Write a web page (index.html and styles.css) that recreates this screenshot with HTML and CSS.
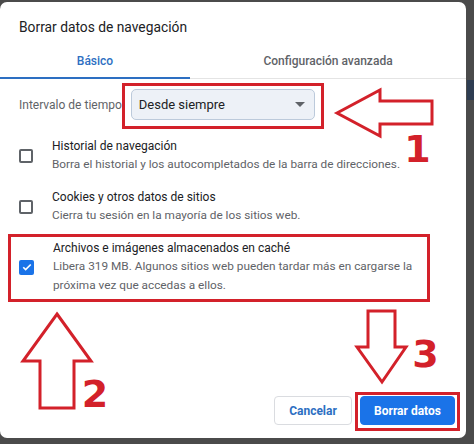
FILE: index.html
```html
<!DOCTYPE html>
<html lang="es">
<head>
<meta charset="utf-8">
<title>Borrar datos de navegación</title>
<link rel="stylesheet" href="styles.css">
</head>
<body>
<div class="page">
  <div class="bg-strip"></div>
  <div class="dialog">
    <h1 class="title">Borrar datos de navegación</h1>
    <div class="tabs">
      <div class="tab active">Básico</div>
      <div class="tab">Configuración avanzada</div>
    </div>
    <div class="range">
      <span class="label">Intervalo de tiempo</span>
      <div class="select">
        <span class="select-value">Desde siempre</span>
        <span class="caret"></span>
      </div>
    </div>
    <div class="options">
      <div class="option">
        <span class="checkbox"></span>
        <div class="option-text">
          <div class="option-title">Historial de navegación</div>
          <div class="option-desc">Borra el historial y los autocompletados de la barra de direcciones.</div>
        </div>
      </div>
      <div class="option">
        <span class="checkbox"></span>
        <div class="option-text">
          <div class="option-title">Cookies y otros datos de sitios</div>
          <div class="option-desc">Cierra tu sesión en la mayoría de los sitios web.</div>
        </div>
      </div>
      <div class="option">
        <span class="checkbox checked">
          <svg viewBox="0 0 16 16" width="12" height="12"><path d="M3 8.3l3.2 3.2L13 4.7" fill="none" stroke="#fff" stroke-width="2.2"/></svg>
        </span>
        <div class="option-text">
          <div class="option-title">Archivos e imágenes almacenados en caché</div>
          <div class="option-desc">Libera 319 MB. Algunos sitios web pueden tardar más en cargarse la próxima vez que accedas a ellos.</div>
        </div>
      </div>
    </div>
    <div class="actions">
      <button class="btn">Cancelar</button>
      <button class="btn primary">Borrar datos</button>
    </div>
  </div>
  <svg class="annot" viewBox="0 0 474 444" width="474" height="444">
    <g fill="none" stroke="#d3212a" stroke-width="3">
      <rect x="123.5" y="82.5" width="199" height="43"/>
      <rect x="9.5" y="233.5" width="419" height="65"/>
      <rect x="356.5" y="391.5" width="102" height="36"/>
    </g>
    <g fill="#fff" stroke="#d3212a" stroke-width="3" stroke-linejoin="miter">
      <polygon points="337,111 380,88 380,99 432,99 432,122 380,122 380,134"/>
      <polygon points="57,312 91,359 74,359 74,406 40,406 40,359 23,359"/>
      <polygon points="368,309 395,309 395,345 406,345 382,380 357,345 368,345"/>
    </g>
    <g class="num" fill="#d3212a">
      <text x="417.5" y="160" text-anchor="middle">1</text>
      <text x="95" y="405" text-anchor="middle">2</text>
      <text x="425.5" y="365" text-anchor="middle">3</text>
    </g>
  </svg>
</div>
</body>
</html>
```
FILE: styles.css
```css
html, body {
  margin: 0;
  padding: 0;
}
body {
  background: #4b4b4b;
  font-family: Roboto, "Liberation Sans", sans-serif;
  width: 474px;
  height: 444px;
  overflow: hidden;
}
.page {
  position: relative;
  width: 474px;
  height: 444px;
}
.bg-strip {
  position: absolute;
  left: 467px;
  top: 78px;
  width: 7px;
  height: 20px;
  background: #2e3d52;
}
.dialog {
  position: relative;
  margin-top: 2px;
  width: 466px;
  height: 436px;
  background: #fff;
  border-radius: 7px;
  display: flex;
  flex-direction: column;
  box-sizing: border-box;
  padding-bottom: 13px;
}
.title {
  margin: 15px 0 0 19px;
  font-size: 13.8px;
  line-height: 20px;
  font-weight: 400;
  color: #202124;
}
.tabs {
  display: flex;
  margin-top: 8px;
}
.tab {
  height: 34px;
  box-sizing: border-box;
  display: flex;
  align-items: center;
  justify-content: center;
  font-size: 12px;
  font-weight: 500;
  color: #5f6368;
  border-bottom: 1px solid #e4e4e4;
  padding-bottom: 2px;
  flex: 1;
}
.tab.active {
  flex: 0 0 190px;
  color: #2d6fc2;
  border-bottom: 2px solid #2d6fc2;
  padding-bottom: 1px;
}
.range {
  display: flex;
  align-items: center;
  margin: 10px 0 0 19px;
}
.label {
  font-size: 12px;
  color: #5f6368;
}
.select {
  margin-left: 9px;
  width: 184px;
  height: 31px;
  box-sizing: border-box;
  background: #edf1f7;
  border: 1px solid #bccadb;
  border-radius: 5px;
  display: flex;
  align-items: center;
  justify-content: space-between;
  padding: 0 8px 0 7px;
}
.select-value {
  font-size: 13px;
  color: #202124;
}
.caret {
  width: 0;
  height: 0;
  border-left: 5px solid transparent;
  border-right: 5px solid transparent;
  border-top: 5px solid #5f6368;
  margin-right: 1px;
}
.options {
  padding: 10px 0 0 19px;
}
.option {
  display: flex;
  align-items: center;
  padding: 7px 0;
}
.checkbox {
  width: 14px;
  height: 14px;
  box-sizing: border-box;
  border: 2px solid #5f6368;
  border-radius: 2px;
  flex: 0 0 14px;
  display: flex;
  align-items: center;
  justify-content: center;
}
.checkbox.checked {
  width: 15px;
  height: 15px;
  flex-basis: 15px;
  background: #1a73e8;
  border: none;
}
.option-text {
  margin-left: 19px;
  width: 370px;
}
.option-title {
  font-size: 12px;
  line-height: 18px;
  color: #202124;
}
.option-desc {
  font-size: 11.8px;
  line-height: 19px;
  color: #5f6368;
}
.actions {
  margin-top: auto;
  display: flex;
  justify-content: flex-end;
  gap: 8px;
  padding-right: 11px;
}
.btn {
  height: 29px;
  box-sizing: border-box;
  border: 1px solid #dadce0;
  border-radius: 4px;
  background: #fff;
  color: #2d6fc2;
  font-family: Roboto, "Liberation Sans", sans-serif;
  font-size: 12px;
  font-weight: 700;
  padding: 0;
  white-space: nowrap;
  width: 78px;
}
.btn.primary {
  width: 95px;
  background: #1a73e8;
  border-color: #1a73e8;
  color: #fff;
}
.annot {
  position: absolute;
  left: 0;
  top: 0;
  pointer-events: none;
}
.num text {
  font-family: "DejaVu Sans", sans-serif;
  font-weight: 700;
  font-size: 38px;
}
```
